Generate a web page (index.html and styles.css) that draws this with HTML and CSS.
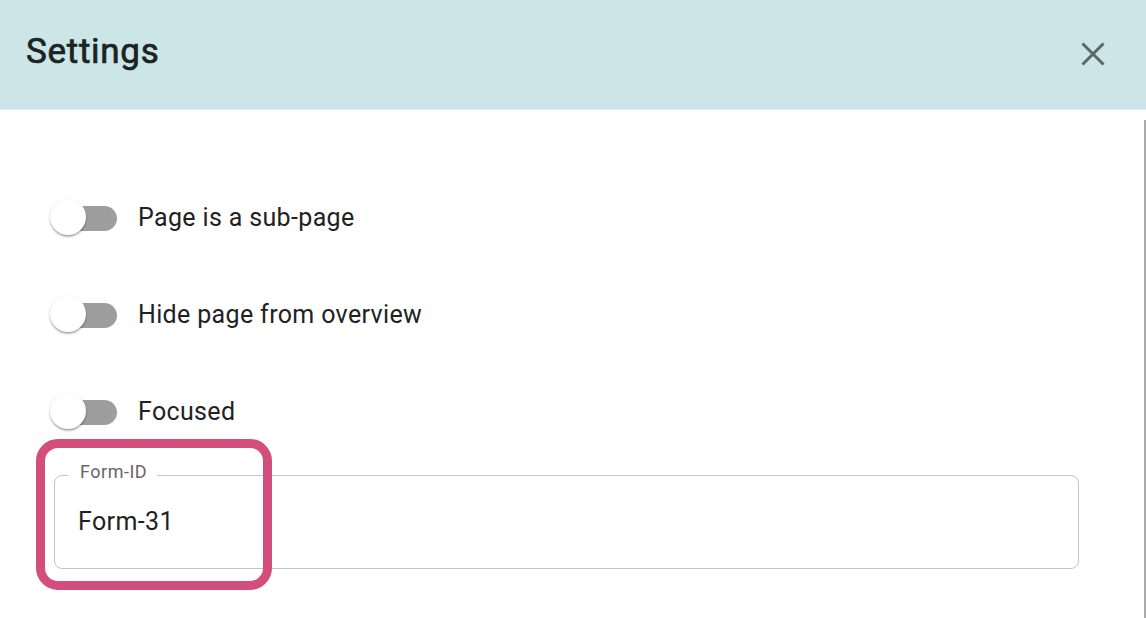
FILE: index.html
```html
<!DOCTYPE html>
<html lang="en">
<head>
<meta charset="utf-8">
<title>Settings</title>
<link rel="stylesheet" href="styles.css">
</head>
<body>
<div class="dialog">
  <header class="header">
    <h1 class="title">Settings</h1>
    <button class="close" aria-label="Close">
      <svg width="24" height="24" viewBox="0 0 24 24"><path d="M1.5 1.5 L22.5 22.5 M22.5 1.5 L1.5 22.5" stroke="#5b6666" stroke-width="3" fill="none"/></svg>
    </button>
  </header>
  <main class="sheet">
    <div class="options">
      <label class="row">
        <span class="switch"><span class="track"></span><span class="thumb"></span></span>
        <span class="row-label">Page is a sub-page</span>
      </label>
      <label class="row">
        <span class="switch"><span class="track"></span><span class="thumb"></span></span>
        <span class="row-label">Hide page from overview</span>
      </label>
      <label class="row">
        <span class="switch"><span class="track"></span><span class="thumb"></span></span>
        <span class="row-label">Focused</span>
      </label>
    </div>
    <div class="field">
      <span class="field-label">Form-ID</span>
      <span class="field-value">Form-31</span>
      <span class="highlight"></span>
    </div>
  </main>
</div>
</body>
</html>
```
FILE: styles.css
```css
html, body {
  margin: 0;
  padding: 0;
  background: #ffffff;
}
body {
  font-family: Roboto, "Liberation Sans", sans-serif;
  color: #212121;
  width: 1146px;
  height: 618px;
  overflow: hidden;
}
.dialog {
  display: flex;
  flex-direction: column;
  height: 618px;
}
.header {
  height: 110px;
  background: #cce6e7;
  border-bottom: 1px solid #d8eeee;
  display: flex;
  align-items: center;
  justify-content: space-between;
  padding: 0 41px 6px 26px;
  box-sizing: border-box;
  flex: none;
}
.title {
  margin: 0;
  font-size: 35px;
  font-weight: 400;
  color: #1b2323;
  letter-spacing: 0.7px;
  -webkit-text-stroke: 0.7px #1b2323;
}
.close {
  background: none;
  border: 0;
  padding: 0;
  width: 24px;
  height: 24px;
  margin-top: 4px;
  display: flex;
}
.sheet {
  flex: 1;
  margin-top: 10px;
  border-right: 2px solid #ababab;
  padding-top: 49px;
  position: relative;
}
.options {
  display: flex;
  flex-direction: column;
}
.row {
  height: 97px;
  display: flex;
  align-items: center;
  padding-left: 50px;
  gap: 21px;
}
.switch {
  position: relative;
  width: 67px;
  height: 36px;
  flex: none;
}
.track {
  position: absolute;
  left: 6px;
  right: 0;
  top: 6px;
  height: 25px;
  border-radius: 13px;
  background: #9e9e9e;
}
.thumb {
  position: absolute;
  left: 0;
  top: -1px;
  width: 36px;
  height: 36px;
  border-radius: 50%;
  background: #ffffff;
  box-shadow: 0 2px 2px rgba(0,0,0,0.2), 0 1px 3px rgba(0,0,0,0.14), 0 2px 1px -1px rgba(0,0,0,0.12);
}
.row-label {
  font-size: 25px;
  color: #222222;
  letter-spacing: 0.35px;
}
.field {
  position: relative;
  margin: 15px 65px 0 54px;
  height: 94px;
  box-sizing: border-box;
  border: 1px solid #c4c4c4;
  border-radius: 8px;
  display: flex;
  align-items: center;
  padding-left: 23px;
}
.field-label {
  position: absolute;
  left: 13px;
  top: -14px;
  padding: 0 10px 0 12px;
  background: #ffffff;
  font-size: 18px;
  letter-spacing: 0.5px;
  line-height: 20px;
  color: #666666;
}
.field-value {
  font-size: 25px;
  letter-spacing: 0.4px;
  line-height: 30px;
  color: #1f1f1f;
}
.highlight {
  position: absolute;
  left: -19px;
  top: -37px;
  width: 236px;
  height: 151px;
  box-sizing: border-box;
  border: 9px solid #d44e7b;
  border-radius: 22px;
  pointer-events: none;
}
```
